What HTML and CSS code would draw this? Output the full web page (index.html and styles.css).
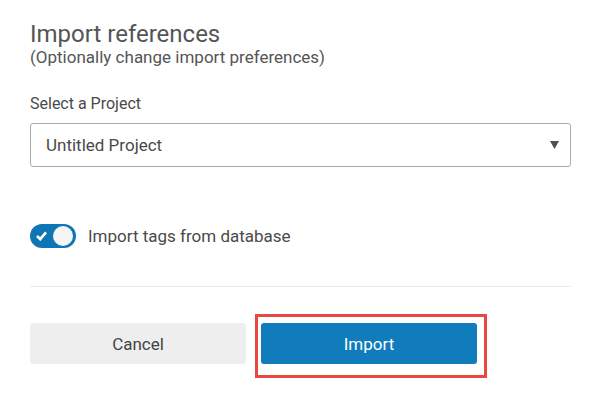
FILE: index.html
```html
<!DOCTYPE html>
<html lang="en">
<head>
    <meta charset="UTF-8">
    <title>Import references</title>
    <link rel="stylesheet" href="styles.css">
</head>
<body>
    <div class="dialog">
        <div class="header">
            <h1>Import references</h1>
            <p class="subtitle">(Optionally change import preferences)</p>
        </div>
        <label class="field-label" for="project">Select a Project</label>
        <div class="select-box">
            <span>Untitled Project</span>
            <svg class="arrow" width="9" height="8" viewBox="0 0 9 8"><path d="M0 0 H9 L4.5 8 Z" fill="#505050"/></svg>
        </div>
        <div class="toggle-row">
            <span class="toggle">
                <svg class="check" width="11" height="10" viewBox="0 0 11 10"><path d="M1 5 L4.2 8.2 L10 1.3" fill="none" stroke="#fff" stroke-width="2.6"/></svg>
                <span class="knob"></span>
            </span>
            <span class="toggle-label">Import tags from database</span>
        </div>
        <hr class="divider">
        <div class="actions">
            <button class="btn btn-cancel">Cancel</button>
            <button class="btn btn-import">Import</button>
            <span class="highlight"></span>
        </div>
    </div>
</body>
</html>
```

FILE: styles.css
```css
body {
    font-family: Roboto, sans-serif;
    color: #4a4a4a;
    background-color: #fff;
    margin: 0;
    padding: 0;
}
.dialog {
    padding: 20px 30px 40px 30px;
}
h1 {
    font-size: 24px;
    font-weight: 400;
    color: #555;
    margin: 0;
    line-height: 28px;
}
.subtitle {
    font-size: 17px;
    color: #555;
    margin: 0;
    line-height: 18px;
}
.field-label {
    display: block;
    font-size: 16px;
    color: #4a4a4a;
    margin-top: 28px;
    line-height: 20px;
}
.select-box {
    margin-top: 9px;
    height: 42px;
    border: 1px solid #aaa;
    border-radius: 3px;
    display: flex;
    align-items: center;
    justify-content: space-between;
    padding: 0 11px 0 15px;
    font-size: 17px;
    color: #4a4a4a;
}
.toggle-row {
    display: flex;
    align-items: center;
    gap: 12px;
    margin-top: 57px;
}
.toggle {
    width: 46px;
    height: 24px;
    border-radius: 12px;
    background-color: #0f76b6;
    display: flex;
    align-items: center;
    justify-content: space-between;
    padding: 0 3px 0 6px;
    box-sizing: border-box;
}
.check {
    flex-shrink: 0;
}
.knob {
    flex-shrink: 0;
    width: 20px;
    height: 20px;
    border-radius: 50%;
    background-color: #f5f5f5;
}
.toggle-label {
    font-size: 17px;
    color: #4a4a4a;
}
.divider {
    border: none;
    border-top: 1px solid #eaeaea;
    margin: 38px 0 0 0;
}
.actions {
    position: relative;
    display: flex;
    gap: 15px;
    margin-top: 36px;
}
.btn {
    width: 216px;
    height: 41px;
    border: none;
    border-radius: 3px;
    font-family: Roboto, sans-serif;
    font-size: 17px;
    cursor: pointer;
}
.btn-cancel {
    background-color: #eee;
    color: #444;
}
.btn-import {
    background-color: #107cbc;
    color: #fff;
}
.highlight {
    position: absolute;
    left: 225px;
    top: -9px;
    width: 232px;
    height: 64px;
    box-sizing: border-box;
    border: 3px solid #e8483f;
}
```
